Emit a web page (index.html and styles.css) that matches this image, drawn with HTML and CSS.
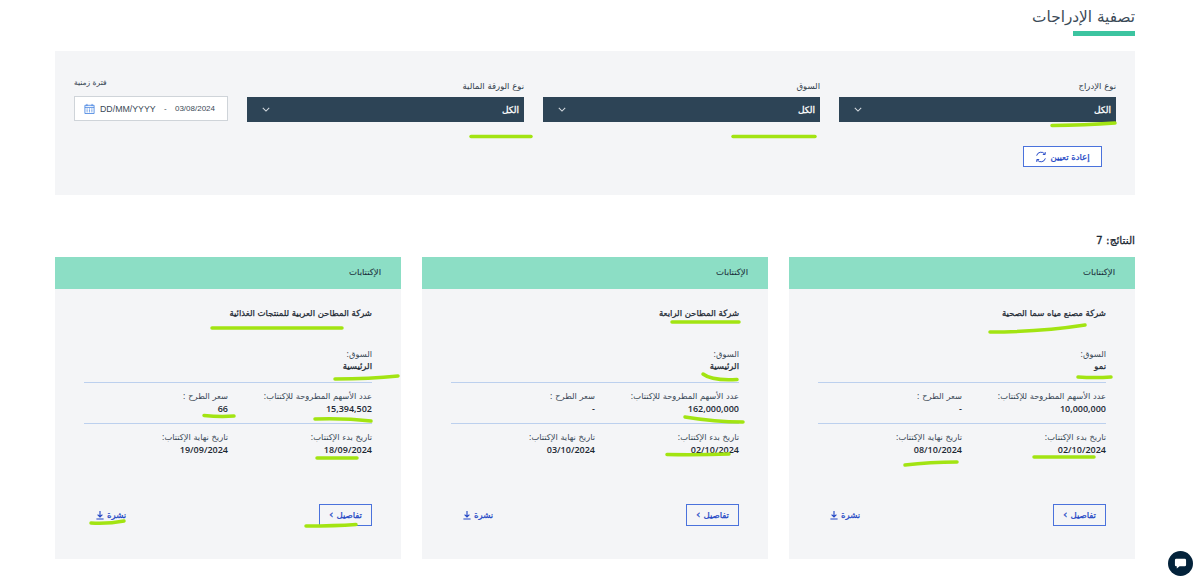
FILE: index.html
```html
<!DOCTYPE html>
<html lang="ar" dir="rtl">
<head>
    <meta charset="UTF-8">
    <meta name="viewport" content="width=device-width, initial-scale=1.0">
    <title>تصفية الإدراجات</title>
    <link rel="stylesheet" href="styles.css">
</head>
<body>
    <main class="page">
        <div class="page-title">
            <h1>تصفية الإدراجات</h1>
        </div>

        <section class="filters">
            <div class="filter-row">
                <div class="field">
                    <label>نوع الإدراج</label>
                    <div class="select"><span>الكل</span>
                        <svg class="chevron" viewBox="0 0 10 6"><path d="M1 1l4 4 4-4"/></svg>
                    </div>
                </div>
                <div class="field">
                    <label>السوق</label>
                    <div class="select"><span>الكل</span>
                        <svg class="chevron" viewBox="0 0 10 6"><path d="M1 1l4 4 4-4"/></svg>
                    </div>
                </div>
                <div class="field">
                    <label>نوع الورقة المالية</label>
                    <div class="select"><span>الكل</span>
                        <svg class="chevron" viewBox="0 0 10 6"><path d="M1 1l4 4 4-4"/></svg>
                    </div>
                </div>
                <div class="field field-date">
                    <label>فترة زمنية</label>
                    <div class="date-range" dir="ltr">
                        <svg class="calendar" viewBox="0 0 12 12">
                            <path d="M1 2.5h10v9H1zM1 4.8h10M3.2 1v2.4M8.8 1v2.4"/>
                            <path d="M2.8 6.5h1.2M5.4 6.5h1.2M8 6.5h1.2M2.8 8h1.2M5.4 8h1.2M8 8h1.2M2.8 9.6h1.2M5.4 9.6h1.2M8 9.6h1.2"/>
                        </svg>
                        <span class="date-from">DD/MM/YYYY</span>
                        <span class="date-sep">-</span>
                        <span class="date-to">03/08/2024</span>
                    </div>
                </div>
            </div>
            <div class="filter-actions">
                <button class="btn btn-reset">إعادة تعيين
                    <svg class="refresh" viewBox="0 0 16 16">
                        <path d="M2.2 6.2A6 6 0 0 1 13 4.2M13.8 9.8A6 6 0 0 1 3 11.8"/>
                        <path d="M13.6 1.4v3.2h-3.2M2.4 14.6v-3.2h3.2"/>
                    </svg>
                </button>
            </div>
        </section>

        <p class="results">النتائج: 7</p>

        <section class="cards">
            <article class="card">
                <div class="card-head">الإكتتابات</div>
                <div class="card-body">
                    <h3 class="company">شركة مصنع مياه سما الصحية</h3>
                    <div class="info info-market">
                        <div><span class="info-label">السوق:</span><b class="market-name">نمو</b></div>
                    </div>
                    <div class="info">
                        <div><span class="info-label">عدد الأسهم المطروحة للإكتتاب:</span><b>10,000,000</b></div>
                        <div><span class="info-label">سعر الطرح :</span><b>-</b></div>
                    </div>
                    <div class="info info-last">
                        <div><span class="info-label">تاريخ بدء الإكتتاب:</span><b>02/10/2024</b></div>
                        <div><span class="info-label">تاريخ نهاية الإكتتاب:</span><b>08/10/2024</b></div>
                    </div>
                    <div class="card-actions">
                        <a class="btn btn-details">تفاصيل <span class="angle">›</span></a>
                        <a class="bulletin">نشرة
                            <svg class="download" viewBox="0 0 10 11"><path d="M5 0v7M2 4.4L5 7.4l3-3M.5 9.8h9"/></svg>
                        </a>
                    </div>
                </div>
            </article>

            <article class="card">
                <div class="card-head">الإكتتابات</div>
                <div class="card-body">
                    <h3 class="company">شركة المطاحن الرابعة</h3>
                    <div class="info info-market">
                        <div><span class="info-label">السوق:</span><b class="market-name">الرئيسية</b></div>
                    </div>
                    <div class="info">
                        <div><span class="info-label">عدد الأسهم المطروحة للإكتتاب:</span><b>162,000,000</b></div>
                        <div><span class="info-label">سعر الطرح :</span><b>-</b></div>
                    </div>
                    <div class="info info-last">
                        <div><span class="info-label">تاريخ بدء الإكتتاب:</span><b>02/10/2024</b></div>
                        <div><span class="info-label">تاريخ نهاية الإكتتاب:</span><b>03/10/2024</b></div>
                    </div>
                    <div class="card-actions">
                        <a class="btn btn-details">تفاصيل <span class="angle">›</span></a>
                        <a class="bulletin">نشرة
                            <svg class="download" viewBox="0 0 10 11"><path d="M5 0v7M2 4.4L5 7.4l3-3M.5 9.8h9"/></svg>
                        </a>
                    </div>
                </div>
            </article>

            <article class="card">
                <div class="card-head">الإكتتابات</div>
                <div class="card-body">
                    <h3 class="company">شركة المطاحن العربية للمنتجات الغذائية</h3>
                    <div class="info info-market">
                        <div><span class="info-label">السوق:</span><b class="market-name">الرئيسية</b></div>
                    </div>
                    <div class="info">
                        <div><span class="info-label">عدد الأسهم المطروحة للإكتتاب:</span><b>15,394,502</b></div>
                        <div><span class="info-label">سعر الطرح :</span><b>66</b></div>
                    </div>
                    <div class="info info-last">
                        <div><span class="info-label">تاريخ بدء الإكتتاب:</span><b>18/09/2024</b></div>
                        <div><span class="info-label">تاريخ نهاية الإكتتاب:</span><b>19/09/2024</b></div>
                    </div>
                    <div class="card-actions">
                        <a class="btn btn-details">تفاصيل <span class="angle">›</span></a>
                        <a class="bulletin">نشرة
                            <svg class="download" viewBox="0 0 10 11"><path d="M5 0v7M2 4.4L5 7.4l3-3M.5 9.8h9"/></svg>
                        </a>
                    </div>
                </div>
            </article>
        </section>
    </main>

    <!-- green marker strokes drawn over the page -->
    <svg class="marker" viewBox="0 0 1200 584">
        <path d="M1052 125.500Q1085 125 1115 123"/>
        <path d="M733 136.500H815"/>
        <path d="M471 136.500H531"/>
        <path d="M990 332Q1040 332 1085 325"/>
        <path d="M1078 377Q1095 378 1111 377"/>
        <path d="M1034 457H1094"/>
        <path d="M905 465Q930 462 957 462"/>
        <path d="M672 322H739"/>
        <path d="M703 374Q712 381 737 379.500"/>
        <path d="M685 417Q715 422 743 422"/>
        <path d="M667 454.500Q700 455 729 454"/>
        <path d="M212 328H342"/>
        <path d="M335 379Q370 379 398 376"/>
        <path d="M204 415.500Q220 417 234 416"/>
        <path d="M315 419Q345 418 371 421"/>
        <path d="M317 458H357"/>
        <path d="M306 526Q335 526 356 524.500"/>
        <path d="M91 523Q108 524 124 521"/>
    </svg>

    <div class="chat">
        <svg viewBox="0 0 14 14"><path d="M2.500 2h9A1.500 1.500 0 0 1 13 3.500v5A1.500 1.500 0 0 1 11.500 10H6l-3 2.500V10h-.5A1.500 1.500 0 0 1 1 8.500v-5A1.500 1.500 0 0 1 2.500 2z"/></svg>
    </div>
</body>
</html>
```

FILE: styles.css
```css
* {
    box-sizing: border-box;
}

body {
    margin: 0;
    height: 584px;
    overflow: hidden;
    position: relative;
    background: #fff;
    color: #1f2d3a;
    font-family: "DejaVu Sans", sans-serif;
}

.page {
    width: 1080px;
    margin-right: 65px;
    padding-top: 6px;
}

.page-title {
    height: 45px;
    position: relative;
}

.page-title h1 {
    margin: 0;
    font-size: 15.300px;
    font-weight: 400;
    line-height: 22px;
    color: #3b4a57;
}

.page-title::after {
    content: "";
    position: absolute;
    right: 0;
    top: 25px;
    width: 62px;
    height: 5px;
    background: #3cc4a0;
}

.filters {
    height: 144px;
    background: #f4f5f7;
    padding: 28px 19px 0;
}

.filter-row {
    display: flex;
    gap: 19px;
}

.field {
    width: 277px;
}

.field label {
    display: block;
    font-size: 8.500px;
    line-height: 14px;
    height: 18px;
    color: #33414d;
}

.field-date {
    width: 154px;
}

.field-date label {
    text-align: left;
    font-size: 7.500px;
    line-height: 8px;
}

.select {
    height: 25px;
    background: #2d4456;
    color: #fff;
    font-size: 9px;
    -webkit-text-stroke: 0.300px #fff;
    display: flex;
    align-items: center;
    justify-content: space-between;
    padding: 0 5px 0 15px;
}

.chevron {
    width: 8px;
    height: 5px;
    fill: none;
    stroke: #d5dbe0;
    stroke-width: 1.300;
}

.date-range {
    height: 25px;
    margin-top: -1px;
    background: #fff;
    border: 1px solid #cfd4d9;
    display: flex;
    align-items: center;
    padding: 0 12px 0 9px;
    font-family: "Liberation Sans", sans-serif;
    color: #3b4a57;
}

.calendar {
    width: 11px;
    height: 11px;
    fill: none;
    stroke: #3f7fe0;
    stroke-width: 0.900;
}

.date-from {
    margin-left: 5px;
    font-size: 8.800px;
}

.date-sep {
    margin: 0 auto;
    font-size: 8px;
}

.date-to {
    font-size: 8px;
}

.filter-actions {
    margin-top: 24px;
    padding-right: 14px;
    display: flex;
}

.btn {
    display: flex;
    align-items: center;
    justify-content: center;
    background: #fff;
    border: 1px solid #4a72dc;
    color: #2347c5;
    font-family: inherit;
    font-size: 8.500px;
    -webkit-text-stroke: 0.250px #2347c5;
}

.btn-reset {
    width: 79px;
    height: 21px;
    padding: 0;
    gap: 3px;
}

.refresh {
    width: 12px;
    height: 12px;
    fill: none;
    stroke: #2347c5;
    stroke-width: 1.300;
}

.results {
    margin: 38px 0 10px;
    height: 14px;
    font-size: 10.500px;
    line-height: 14px;
    -webkit-text-stroke: 0.300px #1c2833;
    color: #1c2833;
}

.cards {
    display: flex;
    gap: 21px;
}

.card {
    width: 346px;
    height: 302px;
    background: #f4f5f7;
}

.card-head {
    height: 32px;
    background: #8cdec5;
    padding-right: 20px;
    font-size: 8.500px;
    line-height: 30px;
    -webkit-text-stroke: 0.100px #22333f;
    color: #22333f;
}

.card-body {
    padding: 18px 29px 0;
}

.company {
    margin: 0;
    height: 41px;
    font-size: 8.500px;
    line-height: 12px;
    font-weight: 400;
    -webkit-text-stroke: 0.250px #1c2833;
    color: #1c2833;
}

.info {
    display: flex;
    border-bottom: 1px solid #bcd0ee;
    height: 41px;
    padding-top: 7px;
}

.info-market {
    height: 35px;
    padding-top: 0;
}

.info-last {
    border-bottom: 0;
}

.info > div {
    width: 50%;
}

.info-label {
    display: block;
    font-size: 8.300px;
    line-height: 12px;
    color: #3b4a57;
}

.info b {
    display: block;
    font-family: "Open Sans", "DejaVu Sans", sans-serif;
    font-size: 9px;
    font-weight: 600;
    line-height: 13px;
    color: #1c2833;
}

.info .market-name {
    font-family: "DejaVu Sans", sans-serif;
    font-size: 8.500px;
    font-weight: 400;
    -webkit-text-stroke: 0.250px #1c2833;
}

.card-actions {
    margin-top: 39px;
    display: flex;
    justify-content: space-between;
    align-items: center;
    padding-left: 12px;
}

.btn-details {
    width: 53px;
    height: 22px;
    gap: 3px;
    background: none;
}

.angle {
    font-size: 11px;
    line-height: 10px;
}

.bulletin {
    display: flex;
    align-items: center;
    gap: 3px;
    color: #2347c5;
    font-size: 8.500px;
    -webkit-text-stroke: 0.250px #2347c5;
}

.download {
    width: 8px;
    height: 9px;
    fill: none;
    stroke: #2347c5;
    stroke-width: 1.400;
}

.marker {
    position: absolute;
    left: 0;
    top: 0;
    width: 1200px;
    height: 584px;
    pointer-events: none;
    fill: none;
    stroke: #a2e412;
    stroke-width: 3.500;
    stroke-linecap: round;
}

.chat {
    position: absolute;
    left: 1167.500px;
    top: 551px;
    width: 25px;
    height: 25px;
    border-radius: 50%;
    background: #03223a;
    display: flex;
    align-items: center;
    justify-content: center;
}

.chat svg {
    width: 13px;
    height: 13px;
    fill: #fff;
}
```
